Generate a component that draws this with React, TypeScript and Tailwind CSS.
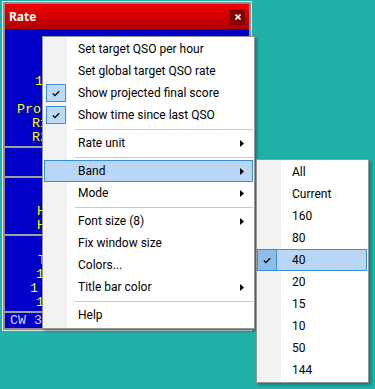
import React from "react";

type MI = { label?: string; sep?: boolean; checked?: boolean; sub?: boolean; hot?: boolean };

const mainItems: MI[] = [
  { label: "Set target QSO per hour" },
  { label: "Set global target QSO rate" },
  { label: "Show projected final score", checked: true },
  { label: "Show time since last QSO", checked: true },
  { sep: true },
  { label: "Rate unit", sub: true },
  { sep: true },
  { label: "Band", sub: true, hot: true },
  { label: "Mode", sub: true },
  { sep: true },
  { label: "Font size (8)", sub: true },
  { label: "Fix window size" },
  { label: "Colors..." },
  { label: "Title bar color", sub: true },
  { sep: true },
  { label: "Help" },
];

const bandItems: MI[] = [
  { label: "All" },
  { label: "Current" },
  { label: "160" },
  { label: "80" },
  { label: "40", checked: true, hot: true },
  { label: "20" },
  { label: "15" },
  { label: "10" },
  { label: "50" },
  { label: "144" },
];

const Check = () => (
  <svg width="8" height="7" viewBox="0 0 8 7">
    <path d="M0.8 3.4 L2.9 5.6 L7.2 1.2" fill="none" stroke="#000" strokeWidth="1.3" />
  </svg>
);

const Arrow = () => (
  <svg width="4" height="7" viewBox="0 0 4 7">
    <path d="M0 0 L4 3.5 L0 7Z" fill="#000" />
  </svg>
);

function Row({ text, pl, color = "text-[#ffff00]" }: { text: string; pl: string; color?: string }) {
  return (
    <div className={`h-[14px] leading-[14px] whitespace-pre ${pl} ${color}`}>{text}</div>
  );
}

const mono = "font-['Liberation_Mono',monospace] text-[13.33px]";

export default function App() {
  return (
    <div className="relative w-[375px] h-[389px] overflow-hidden bg-[#20b2aa] font-['Roboto',sans-serif]">
      {/* Rate window */}
      <div className="absolute left-[2px] top-[1px] w-[250px] bg-[#e4e4e4] p-[1px]">
        <div className="border-2 border-[#8e8e8e] flex flex-col">
          <div className="h-[25px] flex items-center justify-between pl-[4px] pr-[4px] bg-gradient-to-b from-[#f40000] to-[#b00000]">
            <span className="text-white font-bold text-[12px] font-['Noto_Sans',sans-serif]">Rate</span>
            <div className="w-[15px] h-[16px] bg-[#800000] flex items-center justify-center">
              <svg width="6" height="6" viewBox="0 0 6 6">
                <path d="M0.5 0.5 L5.5 5.5 M5.5 0.5 L0.5 5.5" stroke="#fff" strokeWidth="1.6" />
              </svg>
            </div>
          </div>
          <div className={`bg-[#0000c8] flex flex-col ${mono}`}>
            <div className="h-[117px] flex flex-col justify-end pb-[1px]">
              <Row text="1" pl="pl-[30px]" />
              <Row text="" pl="pl-[30px]" />
              <Row text="Proj" pl="pl-[12px]" />
              <Row text="R1" pl="pl-[27px]" />
              <Row text="R2" pl="pl-[27px]" />
            </div>
            <div className="h-[2px] bg-[#a0a0a0]" />
            <div className="h-[28px]" />
            <div className="h-[2px] bg-[#a0a0a0]" />
            <div className="h-[56px] flex flex-col justify-end pb-[1px]">
              <Row text="H" pl="pl-[32px]" />
              <Row text="H" pl="pl-[32px]" />
            </div>
            <div className="h-[2px] bg-[#a0a0a0]" />
            <div className="h-[75px] flex flex-col justify-end pb-[1px]">
              <Row text="T" pl="pl-[33px]" />
              <Row text="1" pl="pl-[31px]" />
              <Row text="1" pl="pl-[25px]" />
              <Row text="1" pl="pl-[31px]" />
            </div>
            <div className="h-[2px] bg-[#a0a0a0]" />
            <div className="h-[15px] leading-[15px] pl-[5px] text-[#d4d4ff] whitespace-pre">CW 34</div>
          </div>
        </div>
      </div>

      {/* Context menu */}
      <div className="absolute left-[42px] top-[36px] w-[213px] border border-[#979797] pt-[1px] pb-[2px] px-[1px] bg-[linear-gradient(to_right,#f2f2f2_24px,#ffffff_24px)] shadow-[2px_2px_3px_rgba(0,0,0,0.35)] text-[12px] text-black">
        {mainItems.map((it, i) =>
          it.sep ? (
            <div key={i} className="h-[6px] flex items-center pl-[31px]">
              <div className="h-[1px] w-full bg-[#c9c9c9]" />
            </div>
          ) : (
            <div
              key={i}
              className={`h-[22px] flex items-center ${it.hot ? "bg-[#b9d7f4] shadow-[inset_0_0_0_1px_#3b8ddd]" : ""}`}
            >
              <div
                className={`w-[20px] h-[18px] ml-[2px] flex items-center justify-center ${it.checked ? "bg-[#bcdaf5] border border-[#3b8ddd]" : ""}`}
              >
                {it.checked ? <Check /> : null}
              </div>
              <span className="ml-[12px] leading-[22px]">{it.label}</span>
              {it.sub ? (
                <div className="ml-auto mr-[9px] flex items-center">
                  <Arrow />
                </div>
              ) : null}
            </div>
          )
        )}
      </div>

      {/* Band submenu */}
      <div className="absolute left-[256px] top-[159px] w-[113px] border border-[#979797] py-[1px] pl-0 pr-[1px] bg-[linear-gradient(to_right,#f2f2f2_24px,#ffffff_24px)] shadow-[2px_2px_3px_rgba(0,0,0,0.35)] text-[12px] text-black">
        {bandItems.map((it, i) => (
          <div
            key={i}
            className={`h-[22px] flex items-center ${it.hot ? "bg-[#b9d7f4] shadow-[inset_0_0_0_1px_#3b8ddd]" : ""}`}
          >
            <div
              className={`w-[20px] h-[22px] flex items-center justify-center ${it.checked ? "bg-[#8fbde9] border border-[#3b8ddd]" : ""}`}
            >
              {it.checked ? <Check /> : null}
            </div>
            <span className="ml-[15px] leading-[22px]">{it.label}</span>
          </div>
        ))}
      </div>
    </div>
  );
}
